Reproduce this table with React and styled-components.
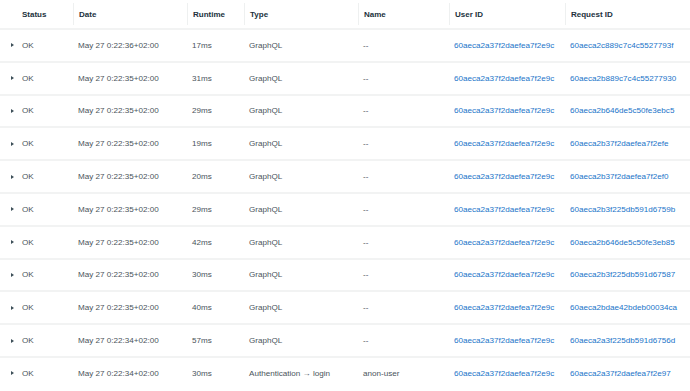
import React from "react";
import styled, { createGlobalStyle } from "styled-components";

const Global = createGlobalStyle`
  html, body { margin: 0; padding: 0; background: #fff; }
  body { font-family: "Liberation Sans", Arial, sans-serif; }
`;

const Table = styled.div`
  width: 690px;
  display: grid;
  grid-template-columns: 73px 114px 57px 114px 91px 116px 1fr;
`;

const HeadCell = styled.div`
  display: flex;
  align-items: center;
  padding-left: ${(p) => (p.$first ? "22px" : "5px")};
  font-size: 8px;
  font-weight: 700;
  color: #21313c;
  border-left: ${(p) => (p.$first ? "none" : "1px solid #eef0f0")};
  box-sizing: border-box;
  margin: 3px 0;
  height: 22px;
  white-space: nowrap;
`;

const Row = styled.div`
  display: contents;
`;

const Cell = styled.div`
  height: 32.8px;
  box-sizing: border-box;
  border-top: 2px solid #f2f3f3;
  display: flex;
  align-items: center;
  padding-left: ${(p) => (p.$first ? "11px" : "5px")};
  font-size: 8.1px;
  color: ${(p) => (p.$link ? "#1a74c9" : "#4a545b")};
  white-space: nowrap;
  overflow: hidden;
`;

const Caret = styled.span`
  display: inline-block;
  width: 0;
  height: 0;
  border-top: 2.5px solid transparent;
  border-bottom: 2.5px solid transparent;
  border-left: 3px solid #3d4f58;
  margin-right: 8px;
`;

const headers = ["Status", "Date", "Runtime", "Type", "Name", "User ID", "Request ID"];

const rows = [
  ["May 27 0:22:36+02:00", "17ms", "GraphQL", "--", "60aeca2c889c7c4c5527793f"],
  ["May 27 0:22:35+02:00", "31ms", "GraphQL", "--", "60aeca2b889c7c4c55277930"],
  ["May 27 0:22:35+02:00", "29ms", "GraphQL", "--", "60aeca2b646de5c50fe3ebc5"],
  ["May 27 0:22:35+02:00", "19ms", "GraphQL", "--", "60aeca2b37f2daefea7f2efe"],
  ["May 27 0:22:35+02:00", "20ms", "GraphQL", "--", "60aeca2b37f2daefea7f2ef0"],
  ["May 27 0:22:35+02:00", "29ms", "GraphQL", "--", "60aeca2b3f225db591d6759b"],
  ["May 27 0:22:35+02:00", "42ms", "GraphQL", "--", "60aeca2b646de5c50fe3eb85"],
  ["May 27 0:22:35+02:00", "30ms", "GraphQL", "--", "60aeca2b3f225db591d67587"],
  ["May 27 0:22:35+02:00", "40ms", "GraphQL", "--", "60aeca2bdae42bdeb00034ca"],
  ["May 27 0:22:34+02:00", "57ms", "GraphQL", "--", "60aeca2a3f225db591d6756d"],
  ["May 27 0:22:34+02:00", "30ms", "Authentication \u2192 login", "anon-user", "60aeca2a37f2daefea7f2e97"],
];

const USER = "60aeca2a37f2daefea7f2e9c";

export default function App() {
  return (
    <>
      <Global />
      <Table>
        {headers.map((h, i) => (
          <HeadCell key={h} $first={i === 0}>{h}</HeadCell>
        ))}
        {rows.map((r, i) => (
          <Row key={i}>
            <Cell $first><Caret />OK</Cell>
            <Cell>{r[0]}</Cell>
            <Cell>{r[1]}</Cell>
            <Cell>{r[2]}</Cell>
            <Cell>{r[3]}</Cell>
            <Cell $link>{USER}</Cell>
            <Cell $link>{r[4]}</Cell>
          </Row>
        ))}
      </Table>
    </>
  );
}
